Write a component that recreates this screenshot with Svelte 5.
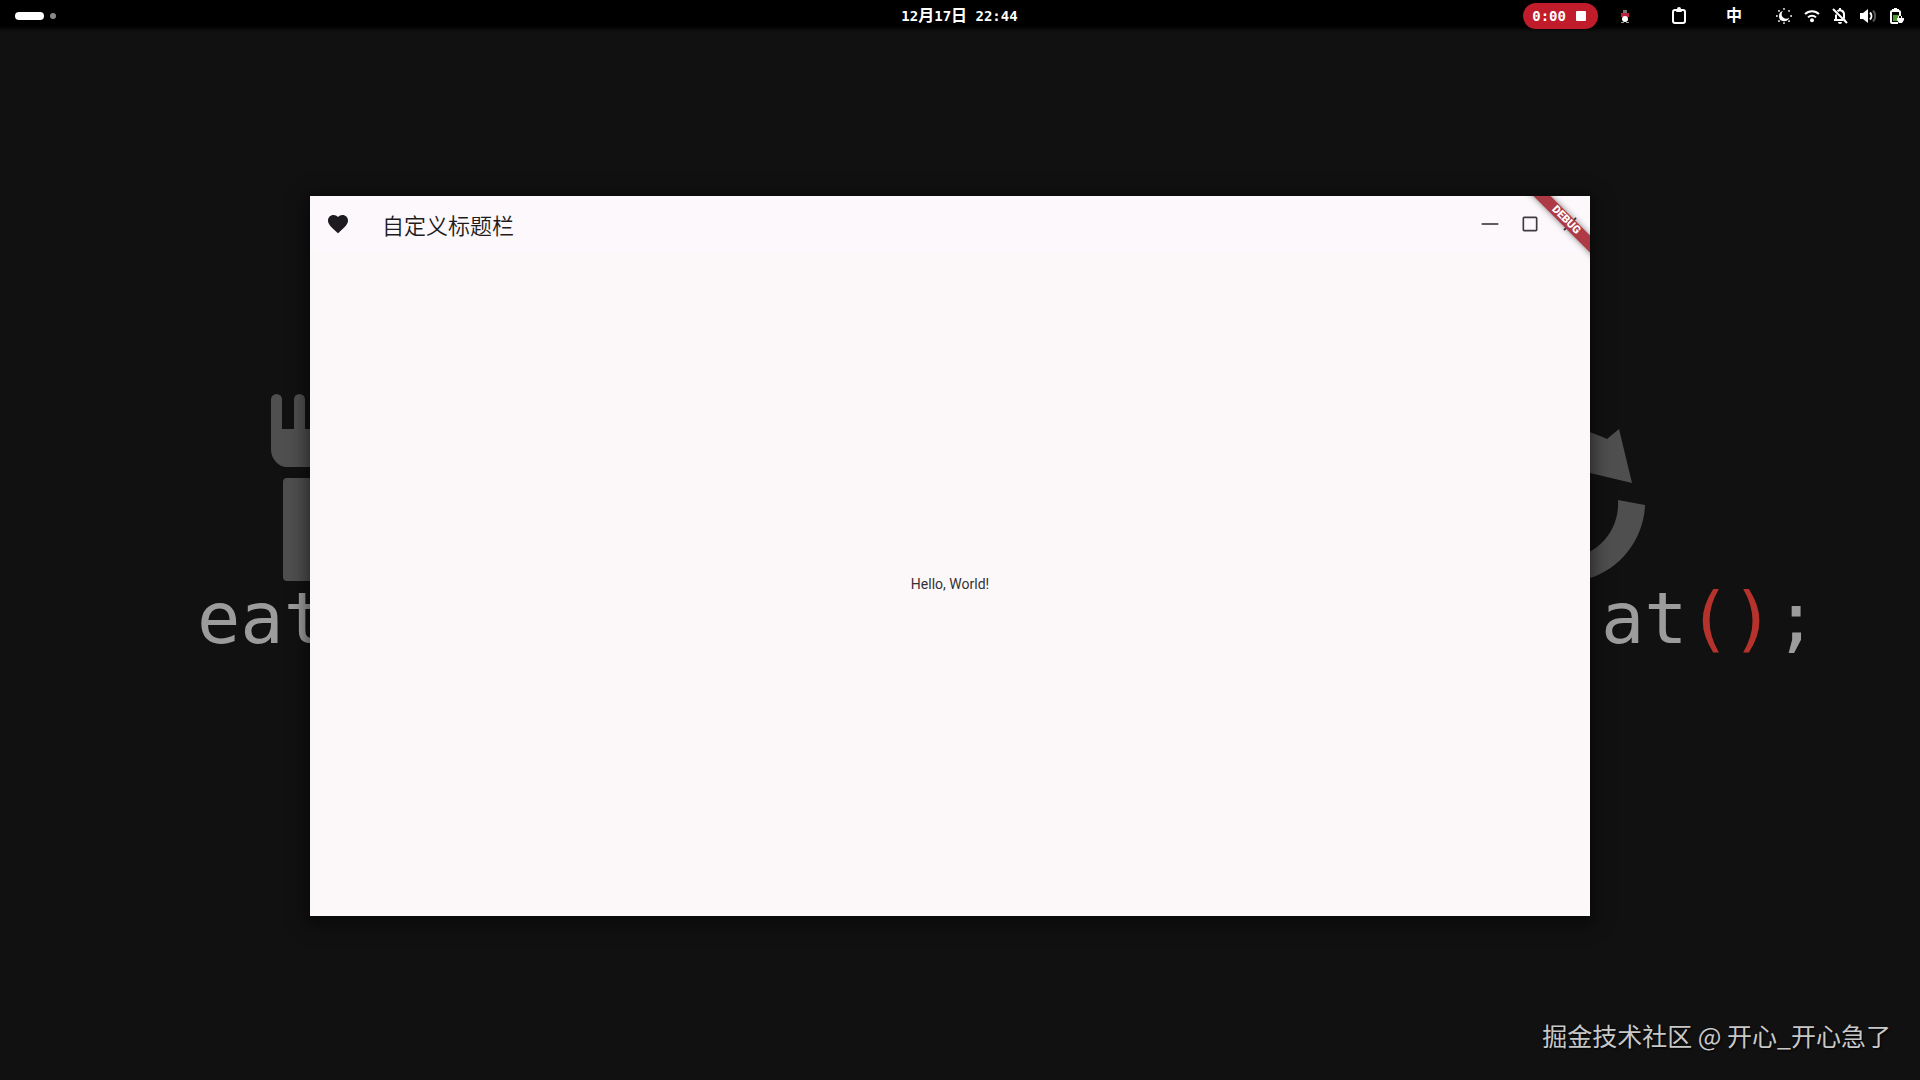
<script lang="ts">
    interface WindowButton {
        name: string;
        path: string;
    }

    const windowButtons: WindowButton[] = [
        { name: 'Minimize', path: 'M2 11h20v2H2z' },
        {
            name: 'Maximize',
            path: 'M19 5v14H5V5h14m0-2H5a2 2 0 0 0-2 2v14a2 2 0 0 0 2 2h14a2 2 0 0 0 2-2V5a2 2 0 0 0-2-2z',
        },
        {
            name: 'Close',
            path: 'M20 5.4 18.6 4 12 10.6 5.4 4 4 5.4 10.6 12 4 18.6 5.4 20 12 13.4 18.6 20 20 18.6 13.4 12z',
        },
    ];

    // Small rays around the night light moon
    const rays = [0, 45, 90, 135, 180, 225, 270, 315];
</script>

<div class="desktop">
    <div class="wallpaper">
        <div class="art art-left">
            <svg class="fork" width="96" height="190" viewBox="0 0 96 190" aria-hidden="true">
                <path
                    d="M0 5.500a5.500 5.500 0 0 1 11 0V35h12V5.500a5.500 5.500 0 0 1 11 0V35h12V5.500a5.500 5.500 0 0 1 11 0V56a18 18 0 0 1-14 17H14A18 18 0 0 1 0 56z"
                />
                <rect x="12" y="84" width="44" height="103" rx="4" />
            </svg>
            <span class="code">eat</span>
        </div>
        <div class="art art-right">
            <svg class="loop" width="110" height="160" viewBox="0 0 110 160" aria-hidden="true">
                <path d="M0 5Q28 2 63 18L75 8 88 62 46 52Q20 44 0 44z" />
                <path d="M74 79 101 84C100 118 76 148 46 157L0 160V138C50 144 76 112 74 79z" />
            </svg>
            <span class="code">at<b>()</b>;</span>
        </div>
    </div>

    <header class="topbar">
        <button class="workspaces" aria-label="Workspaces"><i></i><i></i></button>
        <time class="clock">12<span>月</span>17<span>日</span> 22:44</time>
        <div class="tray">
            <button class="recording" aria-label="Stop recording">0:00<i></i></button>
            <svg class="mascot" width="10" height="14" viewBox="0 0 10 14" aria-hidden="true">
                <path d="M3 1h4v3H3z" fill="#777" />
                <path d="M1 4h8v4H1z" fill="#b9213c" />
                <circle cx="5" cy="10" r="3" fill="#fff" />
                <path d="M1 13h3v1H1zM6 13h3v1H6z" fill="#999" />
            </svg>
            <svg class="clipboard" width="16" height="18" viewBox="0 0 16 18" aria-hidden="true">
                <rect x="2" y="3" width="12" height="13" rx="2" fill="none" stroke="#fff" stroke-width="2" />
                <path d="M5 2h1a2 2 0 0 1 4 0h1v2a1 1 0 0 1-1 1H6a1 1 0 0 1-1-1z" fill="#fff" />
            </svg>
            <span class="input-method">中</span>
            <div class="status">
                <svg viewBox="0 0 16 16" aria-hidden="true">
                    <path d="M7 3A5.200 5.200 0 1 0 13.200 9.500 4.200 4.200 0 0 1 7 3z" />
                    {#each rays as angle}
                        <circle cx="8" cy="0.900" r="0.900" transform="rotate({angle} 8 8)" />
                    {/each}
                </svg>
                <svg viewBox="0 0 16 16" aria-hidden="true">
                    <path class="line" d="M1 6a10 10 0 0 1 14 0M4 9.400a5.700 5.700 0 0 1 8 0" />
                    <circle cx="8" cy="12.300" r="2" />
                </svg>
                <svg viewBox="0 0 16 16" aria-hidden="true">
                    <path class="line" d="M2 12h9M4 11V6.500M5.500 3.200A4 4 0 0 1 12 6.500V10M1 1l14 14" />
                    <path d="M6 14h4a2 2 0 0 1-4 0zM7 0h2v2H7zM12 9l2 4-3-3z" />
                </svg>
                <svg viewBox="0 0 16 16" aria-hidden="true">
                    <path d="M0 5h3l5-4v14l-5-4H0z" />
                    <path class="line" d="M10 4.500a5 5 0 0 1 0 7" />
                    <path class="line dim" d="M13 2.500a8 8 0 0 1 0 11" />
                </svg>
                <svg viewBox="0 0 16 16" aria-hidden="true">
                    <path class="line" d="M12 8V4a1 1 0 0 0-1-1H4a1 1 0 0 0-1 1v10a1 1 0 0 0 1 1h6M4 2h7M6 1h3" />
                    <path d="M5 7h6v6H5z" class="charge" />
                    <path d="M10 8h1v2h2V8h1v2h2v2l-2 3h-3l-2-3v-2h1z" />
                </svg>
            </div>
        </div>
    </header>

    <main class="window">
        <div class="titlebar">
            <svg class="heart" width="24" height="24" viewBox="0 0 24 24" aria-hidden="true">
                <path
                    d="m12 21.350-1.450-1.320C5.400 15.360 2 12.280 2 8.500 2 5.420 4.420 3 7.500 3c1.740 0 3.410.810 4.500 2.090C13.090 3.810 14.760 3 16.500 3 19.580 3 22 5.420 22 8.500c0 3.780-3.400 6.860-8.550 11.540z"
                />
            </svg>
            <h1>自定义标题栏</h1>
            {#each windowButtons as button (button.name)}
                <button class="window-button" aria-label={button.name}>
                    <svg width="20" height="20" viewBox="0 0 24 24"><path d={button.path} /></svg>
                </button>
            {/each}
        </div>
        <p class="content">Hello, World!</p>
        <div class="banner-corner"><span class="banner">DEBUG</span></div>
    </main>

    <footer class="watermark">掘金技术社区 @ 开心_开心急了</footer>
</div>

<style>
    :global(body) {
        margin: 0;
        background: #111;
    }

    .desktop {
        position: relative;
        min-height: 100vh;
        overflow: hidden;
        display: flex;
        flex-direction: column;
        background: #111;
        font-family: 'Noto Sans CJK SC', sans-serif;
    }

    button {
        border: 0;
        padding: 0;
        background: none;
        color: inherit;
        cursor: pointer;
    }

    svg {
        display: block;
        flex: none;
    }

    .topbar {
        position: relative;
        display: grid;
        grid-template-columns: 1fr auto 1fr;
        align-items: center;
        height: 32px;
        padding: 0 16px 0 15px;
        background: linear-gradient(#000 26px, #111);
        color: #fff;
        font: bold 14px/32px 'DejaVu Sans Mono', 'Noto Sans CJK SC', monospace;
    }

    .workspaces {
        display: flex;
        align-items: center;
        gap: 6px;
        justify-self: start;
    }

    .workspaces i {
        width: 6px;
        height: 6px;
        border-radius: 3px;
        background: #888;
    }

    .workspaces i:first-child {
        width: 29px;
        height: 8px;
        border-radius: 4px;
        background: #fff;
    }

    .clock span {
        font-size: 16px;
        line-height: 1;
    }

    .tray {
        display: flex;
        align-items: center;
        justify-self: end;
    }

    .recording {
        display: flex;
        align-items: center;
        gap: 10px;
        height: 26px;
        padding: 0 12px 0 9px;
        border-radius: 13px;
        background: #c01c2b;
        font: inherit;
    }

    .recording i {
        width: 10px;
        height: 10px;
        border-radius: 1px;
        background: #fff;
    }

    .mascot {
        margin-left: 22px;
    }

    .clipboard {
        margin-left: 41px;
    }

    .input-method {
        margin: 0 34px 0 39px;
        font-size: 16px;
    }

    .status {
        display: flex;
        gap: 12px;
    }

    .status svg {
        width: 16px;
        height: 16px;
        fill: #fff;
    }

    .status .line {
        fill: none;
        stroke: #fff;
        stroke-width: 2;
    }

    .status .dim {
        stroke: #555;
    }

    .status .charge {
        fill: #4e9a2f;
    }

    /* wallpaper artwork peeks out on both sides of the window */
    .wallpaper {
        position: absolute;
        inset: 0;
    }

    .art {
        position: absolute;
        top: 394px;
        fill: #4f4f4f;
    }

    .art-left {
        left: calc(50% - 763px);
    }

    .art-right {
        left: calc(50% + 641px);
    }

    .fork {
        margin-left: 74px;
    }

    .loop {
        margin: 27px 0 3px -57px;
    }

    .code {
        display: block;
        color: #9c9c9c;
        font: 72px/68px 'DejaVu Sans Mono', monospace;
        white-space: pre;
    }

    .code b {
        color: #b5332c;
        font-weight: normal;
    }

    .window {
        position: absolute;
        top: 196px;
        left: calc(50% - 650px);
        display: flex;
        flex-direction: column;
        width: 1280px;
        max-width: 100%;
        height: 720px;
        overflow: hidden;
        background: #fcf8fa;
        color: #1d1b20;
        box-shadow: 0 4px 16px 4px rgba(0, 0, 0, 0.5);
    }

    .titlebar {
        display: flex;
        align-items: center;
        height: 56px;
        padding-left: 16px;
        background: #fcf8fb;
    }

    .heart {
        fill: #1d1b20;
    }

    h1 {
        flex: 1;
        margin: 0 0 0 32px;
        font-size: 22px;
        font-weight: 350;
        line-height: 28px;
    }

    .window-button {
        display: grid;
        place-items: center;
        width: 40px;
        height: 40px;
        fill: #3f3b43;
    }

    .content {
        display: grid;
        flex: 1;
        place-items: center;
        margin: 0;
        color: #333136;
        font: 14px/20px Roboto, sans-serif;
    }

    .banner-corner {
        position: absolute;
        top: 0;
        right: 0;
        width: 80px;
        height: 80px;
        overflow: hidden;
        pointer-events: none;
    }

    .banner {
        position: absolute;
        top: 18px;
        right: -36px;
        width: 120px;
        background: #ae3a45;
        box-shadow: 0 0 6px rgba(0, 0, 0, 0.5);
        color: #fff;
        font: 900 11px/12px Roboto, sans-serif;
        text-align: center;
        transform: rotate(45deg);
    }

    .watermark {
        position: relative;
        margin: auto 29px 27px auto;
        color: #c8c8c8;
        font-size: 25px;
        line-height: 36px;
        text-shadow: 1px 1px 2px #000;
    }
</style>
